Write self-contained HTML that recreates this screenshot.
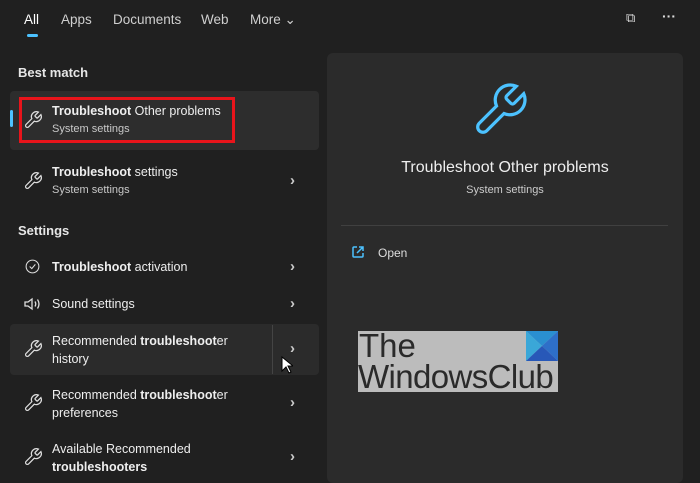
<!DOCTYPE html>
<html><head><meta charset="utf-8"><style>
*{margin:0;padding:0;box-sizing:border-box}
body{width:700px;height:477px;background:#202020;font-family:"Liberation Sans",sans-serif;color:#fff;position:relative;overflow:hidden}
.a{position:absolute}
.tab{font-size:13.5px;color:#cfcfcf;top:12px}
.h{font-size:13px;font-weight:bold;color:#e6e6e6}
.t{font-size:12.5px;color:#eee;line-height:18px}
.s{font-size:11px;color:#c8c8c8}
.chev{color:#ccc;font-size:15px;font-weight:bold}
svg.w{position:absolute;width:20px;height:20px;fill:none;stroke:#ddd;stroke-width:1.5}
</style></head><body>
<div class="a tab" style="left:24px;color:#fff">All</div>
<div class="a" style="left:27px;top:34px;width:11px;height:3px;border-radius:2px;background:#4cc2ff"></div>
<div class="a tab" style="left:61px">Apps</div>
<div class="a tab" style="left:113px">Documents</div>
<div class="a tab" style="left:201px">Web</div>
<div class="a tab" style="left:250px">More ⌄</div>
<div class="a" style="left:626px;top:10px;font-size:13px;color:#ddd">⧉</div>
<div class="a" style="left:662px;top:8px;font-size:14px;color:#ddd;font-weight:bold">···</div>

<div class="a h" style="left:18px;top:65px">Best match</div>
<div class="a" style="left:10px;top:91px;width:309px;height:59px;background:#2d2d2d;border-radius:4px"></div>
<div class="a" style="left:10px;top:110px;width:3px;height:17px;background:#4cc2ff;border-radius:2px"></div>
<div class="a" style="left:19px;top:97px;width:216px;height:46px;border:3px solid #e8141b"></div>
<svg class="w" viewBox="0 0 24 24" style="left:23px;top:110px"><path d="M14.7 6.3a1 1 0 0 0 0 1.4l1.6 1.6a1 1 0 0 0 1.4 0l3.8-3.8a6 6 0 0 1-7.9 7.9l-6.9 6.9a2.1 2.1 0 0 1-3-3l6.9-6.9a6 6 0 0 1 7.9-7.9z"/></svg>
<div class="a t" style="left:52px;top:102px"><b>Troubleshoot</b> Other problems</div>
<div class="a s" style="left:52px;top:123px">System settings</div>

<svg class="w" viewBox="0 0 24 24" style="left:23px;top:171px"><path d="M14.7 6.3a1 1 0 0 0 0 1.4l1.6 1.6a1 1 0 0 0 1.4 0l3.8-3.8a6 6 0 0 1-7.9 7.9l-6.9 6.9a2.1 2.1 0 0 1-3-3l6.9-6.9a6 6 0 0 1 7.9-7.9z"/></svg>
<div class="a t" style="left:52px;top:163px"><b>Troubleshoot</b> settings</div>
<div class="a s" style="left:52px;top:184px">System settings</div>
<div class="a chev" style="left:290px;top:172px">›</div>

<div class="a h" style="left:18px;top:223px">Settings</div>
<svg class="w" viewBox="0 0 24 24" style="left:24px;top:258px;width:17px;height:17px"><circle cx="12" cy="12" r="9"/><path d="M8 12l3 3 5-6"/></svg>
<div class="a t" style="left:52px;top:258px"><b>Troubleshoot</b> activation</div>
<div class="a chev" style="left:290px;top:258px">›</div>
<svg class="a" style="left:24px;top:297px" width="18" height="14" viewBox="0 0 18 14" fill="none" stroke="#ddd" stroke-width="1.3"><path d="M1 5h3l4-3v10l-4-3H1z"/><path d="M11 4.5q1.5 2.5 0 5M13.5 2.5q3 4.5 0 9"/></svg>
<div class="a t" style="left:52px;top:295px">Sound settings</div>
<div class="a chev" style="left:290px;top:295px">›</div>

<div class="a" style="left:10px;top:324px;width:309px;height:51px;background:#2b2b2b;border-radius:4px"></div>
<div class="a" style="left:272px;top:325px;width:1px;height:49px;background:#444"></div>
<svg class="w" viewBox="0 0 24 24" style="left:23px;top:339px"><path d="M14.7 6.3a1 1 0 0 0 0 1.4l1.6 1.6a1 1 0 0 0 1.4 0l3.8-3.8a6 6 0 0 1-7.9 7.9l-6.9 6.9a2.1 2.1 0 0 1-3-3l6.9-6.9a6 6 0 0 1 7.9-7.9z"/></svg>
<div class="a t" style="left:52px;top:332px">Recommended <b>troubleshoot</b>er<br>history</div>
<div class="a chev" style="left:290px;top:340px">›</div>
<svg class="a" style="left:281px;top:356px" width="12" height="18" viewBox="0 0 12 18"><path d="M1 1v14l4-4 3 6 2-1-3-6h5z" fill="#fff" stroke="#000"/></svg>

<svg class="w" viewBox="0 0 24 24" style="left:23px;top:393px"><path d="M14.7 6.3a1 1 0 0 0 0 1.4l1.6 1.6a1 1 0 0 0 1.4 0l3.8-3.8a6 6 0 0 1-7.9 7.9l-6.9 6.9a2.1 2.1 0 0 1-3-3l6.9-6.9a6 6 0 0 1 7.9-7.9z"/></svg>
<div class="a t" style="left:52px;top:386px">Recommended <b>troubleshoot</b>er<br>preferences</div>
<div class="a chev" style="left:290px;top:394px">›</div>
<svg class="w" viewBox="0 0 24 24" style="left:23px;top:447px"><path d="M14.7 6.3a1 1 0 0 0 0 1.4l1.6 1.6a1 1 0 0 0 1.4 0l3.8-3.8a6 6 0 0 1-7.9 7.9l-6.9 6.9a2.1 2.1 0 0 1-3-3l6.9-6.9a6 6 0 0 1 7.9-7.9z"/></svg>
<div class="a t" style="left:52px;top:440px">Available Recommended<br><b>troubleshooters</b></div>
<div class="a chev" style="left:290px;top:448px">›</div>

<div class="a" style="left:327px;top:53px;width:356px;height:430px;background:#2b2b2b;border-radius:6px"></div>
<svg class="a" viewBox="0 0 24 24" style="left:470px;top:80px" width="60" height="60" fill="none" stroke="#4cc2ff" stroke-width="1.3"><path d="M14.7 6.3a1 1 0 0 0 0 1.4l1.6 1.6a1 1 0 0 0 1.4 0l3.8-3.8a6 6 0 0 1-7.9 7.9l-6.9 6.9a2.1 2.1 0 0 1-3-3l6.9-6.9a6 6 0 0 1 7.9-7.9z"/></svg>
<div class="a" style="left:327px;top:159px;width:356px;text-align:center;font-size:16px;color:#eee">Troubleshoot Other problems</div>
<div class="a" style="left:327px;top:184px;width:356px;text-align:center;font-size:11px;color:#ccc">System settings</div>
<div class="a" style="left:341px;top:225px;width:327px;height:1px;background:#404040"></div>
<svg class="a" style="left:351px;top:245px" width="14" height="14" viewBox="0 0 14 14" fill="none" stroke="#4cc2ff" stroke-width="1.5"><path d="M6 2H3a1 1 0 0 0-1 1v8a1 1 0 0 0 1 1h8a1 1 0 0 0 1-1V8M8 2h4v4M12 2L6 8"/></svg>
<div class="a" style="left:378px;top:246px;font-size:12px;color:#ddd">Open</div>

<div class="a" style="left:358px;top:331px;width:200px;height:61px;background:#bcbcbc;overflow:hidden">
<div class="a" style="left:1px;top:-2px;font-size:33px;color:#2a2a2a;line-height:34px">The</div>
<div class="a" style="left:0px;top:29px;font-size:33px;color:#2a2a2a;line-height:34px;letter-spacing:-0.6px;white-space:nowrap">WindowsClub</div>
</div>
<svg class="a" style="left:526px;top:331px" width="32" height="30" viewBox="0 0 32 30"><polygon points="0,0 32,0 16,15" fill="#2a8fd0"/><polygon points="0,0 16,15 0,30" fill="#3aa7d8"/><polygon points="32,0 32,30 16,15" fill="#2e6fc8"/><polygon points="0,30 32,30 16,15" fill="#2858b8"/></svg>
</body></html>
